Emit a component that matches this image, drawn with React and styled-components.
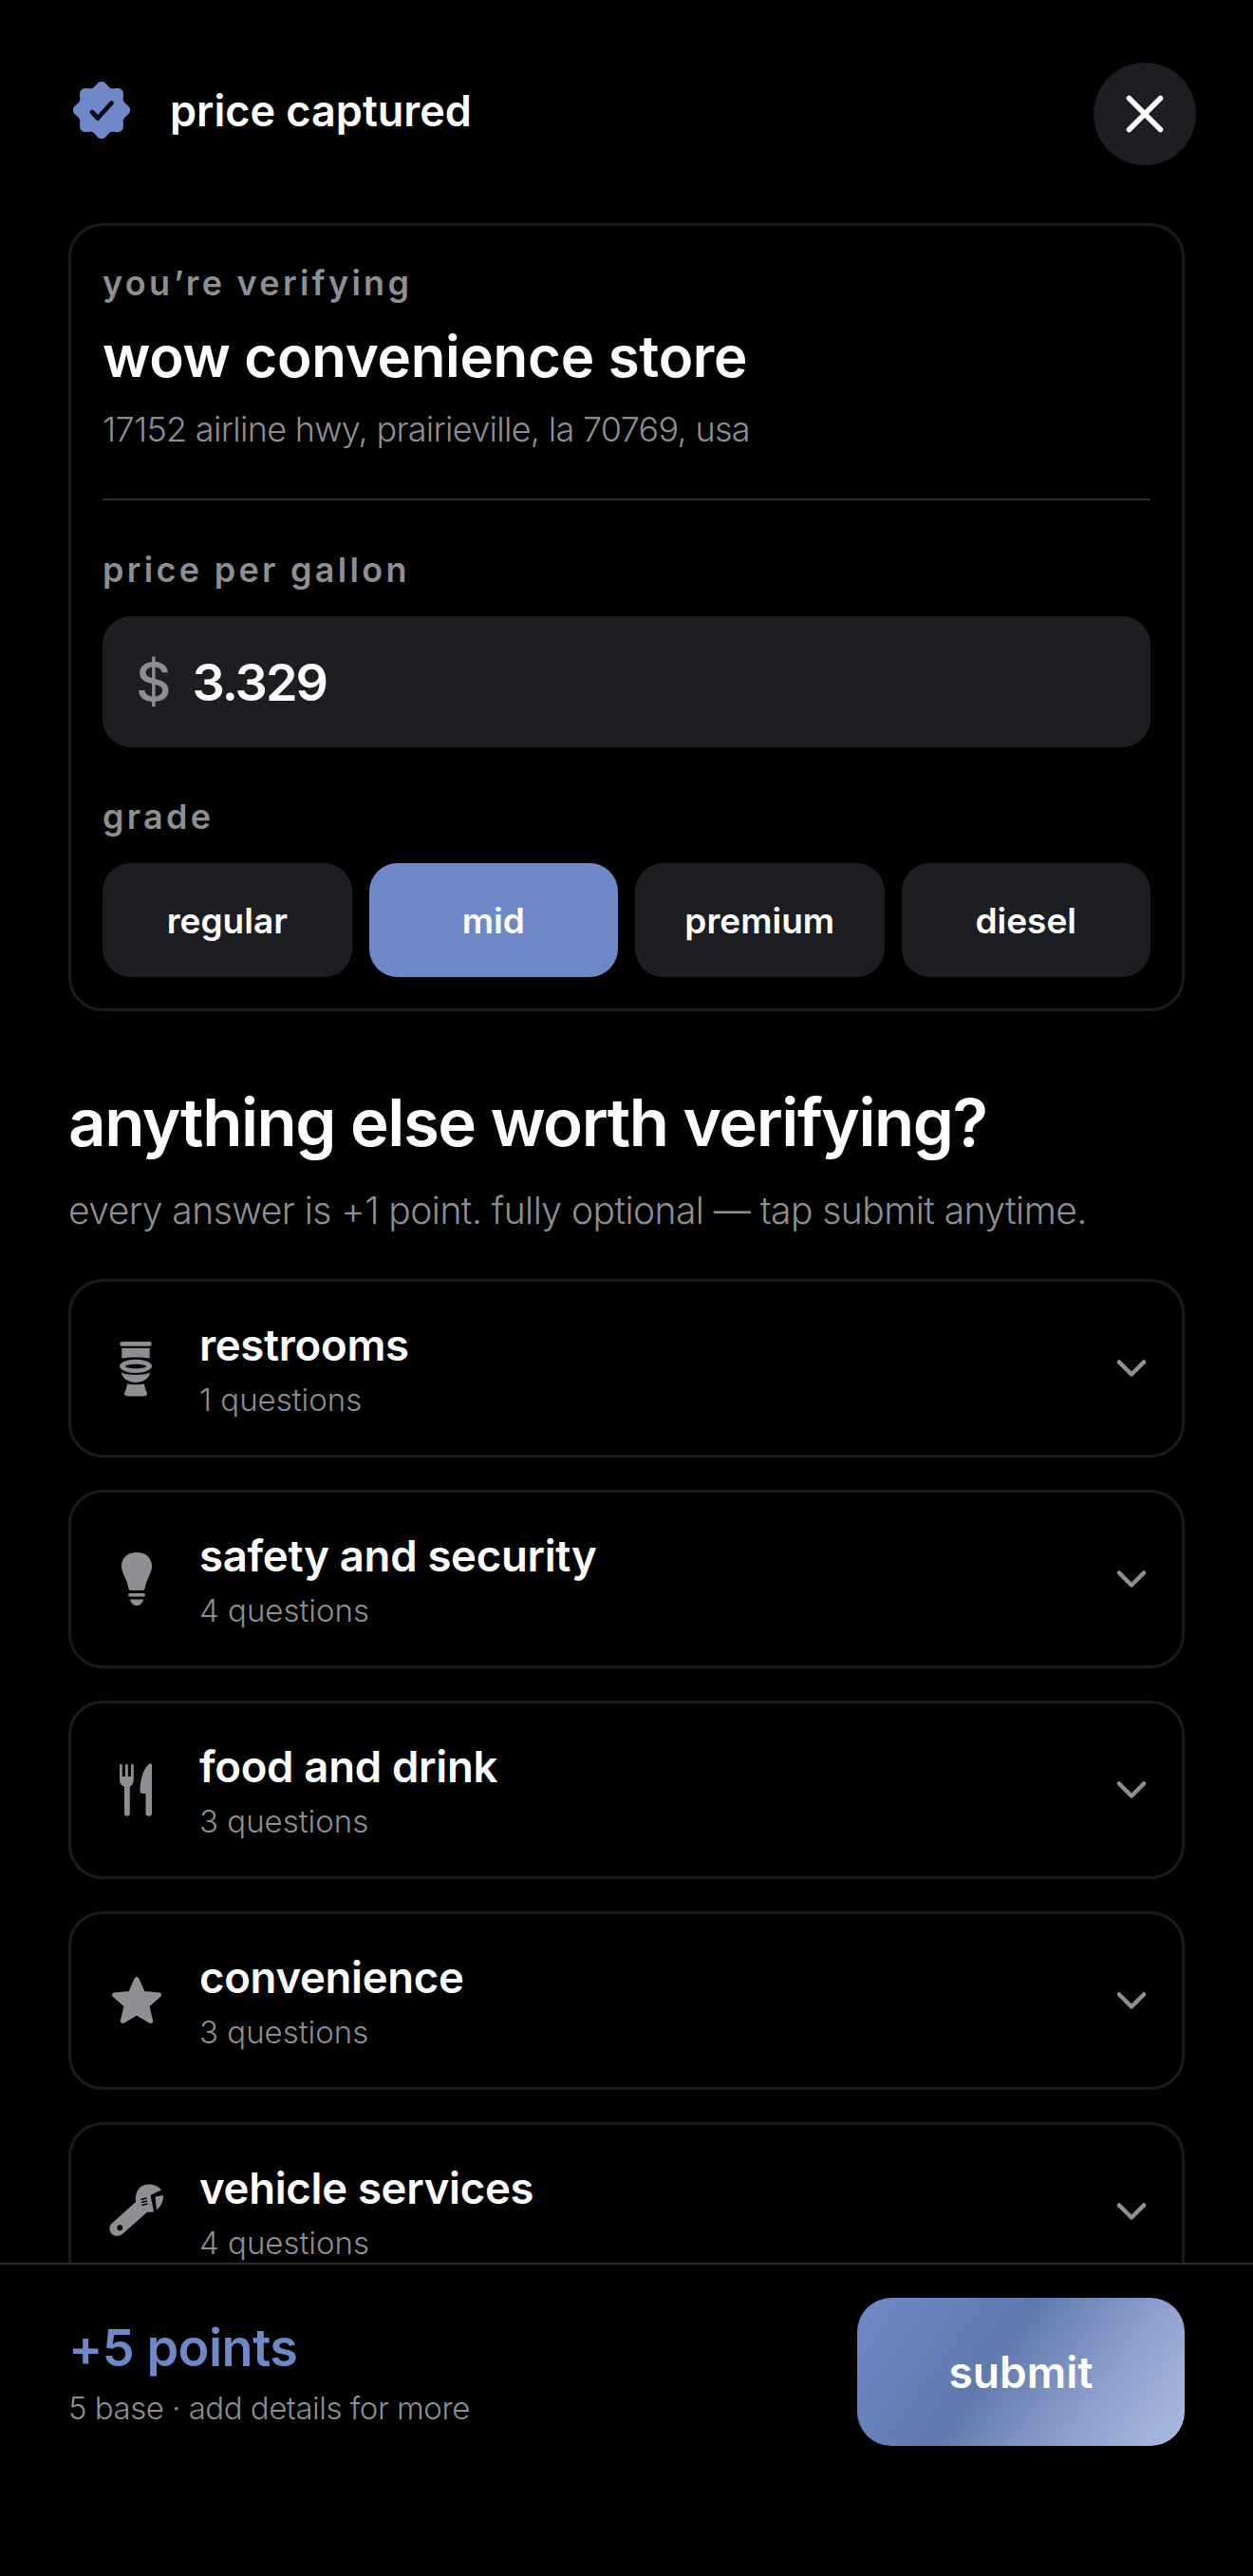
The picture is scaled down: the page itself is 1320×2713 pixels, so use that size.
import React from 'react'
import styled, { createGlobalStyle } from 'styled-components'
import { FiX, FiChevronDown } from 'react-icons/fi'

const GlobalStyle = createGlobalStyle`
  * { box-sizing: border-box; }
  html, body { margin: 0; padding: 0; background: #000; }
  body { font-family: Inter, 'Noto Sans', sans-serif; color: #fff; }
`

// scalloped outline: radius swings around 27.5 with eight lobes
const sealPath = () => {
  const pts = []
  for (let i = 0; i < 96; i++) {
    const a = (i * Math.PI * 2) / 96 - Math.PI / 2
    const r = 27.6 + 2.6 * Math.cos(8 * (a + Math.PI / 2))
    pts.push(`${(30 + r * Math.cos(a)).toFixed(2)},${(30 + r * Math.sin(a)).toFixed(2)}`)
  }
  return pts.join(' ')
}

const Seal = () => (
  <svg width="60" height="60" viewBox="0 0 60 60">
    <polygon points={sealPath()} fill="#6f88c8" />
    <path d="M20 32 L26 38.5 L40.5 22.5" fill="none" stroke="#0b0d14" strokeWidth="4.8" strokeLinecap="round" strokeLinejoin="round" />
  </svg>
)

// row icons all sit in the same 80px square
const IconFrame = ({ children }) => (
  <svg width="80" height="80" viewBox="0 0 80 80" fill="#8e8e93">
    {children}
  </svg>
)

const ToiletIcon = () => (
  <IconFrame>
    <rect x="21.3" y="12" width="33.4" height="4.7" rx="2.3" />
    <path d="M23.3 18.7 H52.7 V29.5 C45 28 31 28 23.3 29.5 Z" />
    <path fillRule="evenodd" d="M38 30.7 C47.4 30.7 55 33.900 55 37.800 C55 41.700 47.400 45 38 45 C28.600 45 21 41.700 21 37.800 C21 33.900 28.600 30.700 38 30.700 Z M38 35.800 C31.900 35.800 27 36.800 27 38 C27 39.200 31.900 40.200 38 40.200 C44.100 40.200 49 39.200 49 38 C49 36.800 44.100 35.800 38 35.800 Z" />
    <path d="M22.700 44.500 C28 47.700 48 47.700 53.300 44.500 C52 50.500 46 55 38 55 C30 55 24 50.500 22.700 44.500 Z" />
    <path d="M29 56.500 C34 57.500 42 57.500 47 56.500 C47.500 60 48.500 63 50 66 C50.500 68.500 48 69.500 45 69.500 H31 C28 69.500 25.500 68.500 26 66 C27.500 63 28.500 60 29 56.500 Z" />
  </IconFrame>
)

const BulbIcon = () => (
  <IconFrame>
    <g transform="translate(23 12)">
      <path d="M16 0 C26 0 32 6 32 14.500 C32 22 26.500 27 24.500 38 C24.300 39.500 23.500 40 22 40 H10 C8.500 40 7.700 39.500 7.500 38 C5.500 27 0 22 0 14.500 C0 6 6 0 16 0 Z" />
      <rect x="7" y="43" width="18" height="3.500" rx="1.700" />
      <path d="M9 49.500 H23 C22 53.500 19.500 56 16 56 C12.500 56 10 53.500 9 49.500 Z" />
    </g>
  </IconFrame>
)

const ForkKnifeIcon = () => (
  <IconFrame>
    <g transform="translate(21 12)">
      <path d="M0 2 C0 0.500 2.800 0.500 2.800 2 V14 H6 V2 C6 0.500 8.800 0.500 8.800 2 V14 H12 V2 C12 0.500 14.800 0.500 14.800 2 V17 C14.800 21.500 12.500 24 10.800 24.500 V53 C10.800 56.700 5 56.700 5 53 V24.500 C2.300 24 0 21.500 0 17 Z" />
      <path d="M34 2 V53 C34 56.700 27.500 56.700 27.500 53 V32 H24.500 C22.500 32 21.500 31 21.500 29 C21.500 17 25 6 31 0.800 C32.500 -0.400 34 0.300 34 2 Z" />
    </g>
  </IconFrame>
)

const StarIcon = () => (
  <IconFrame>
    <g transform="translate(12 14)">
      <path d="M27 3.500 L33.700 18.600 L50.500 20.100 L37.800 31 L41.700 47.500 L27 38.800 L12.300 47.500 L16.200 31 L3.500 20.100 L20.300 18.600 Z" stroke="#8e8e93" strokeWidth="5" strokeLinejoin="round" />
    </g>
  </IconFrame>
)

const WrenchIcon = () => (
  <IconFrame>
    <path fillRule="evenodd" d="M12.700 52.700 L38 30 C37 24 39 17 44 13.500 C50 10 60 11 65 17.500 L53.500 23 L57 40 C55 41 52 41 50 40.700 L25 63 C21 66.500 16 67 13 64 C10 61 9.500 55.500 12.700 52.700 Z M21.300 54.300 A3 3 0 1 0 21.300 60.300 A3 3 0 1 0 21.300 54.300 Z" />
    <path d="M58.500 24.500 L67 23 C67.500 28 65 34 60 38.500 Z" />
    <path d="M43.500 27.500 L49.500 26 M44 30.500 L50 29 M44.500 33.500 L50.500 32" stroke="#000" strokeWidth="1.300" fill="none" />
  </IconFrame>
)

const sections = [
  { title: 'restrooms', count: '1 questions', Icon: ToiletIcon },
  { title: 'safety and security', count: '4 questions', Icon: BulbIcon },
  { title: 'food and drink', count: '3 questions', Icon: ForkKnifeIcon },
  { title: 'convenience', count: '3 questions', Icon: StarIcon },
  { title: 'vehicle services', count: '4 questions', Icon: WrenchIcon },
]

const grades = ['regular', 'mid', 'premium', 'diesel']

const App = () => (
  <Screen>
    <GlobalStyle />
    <Content>
      <Header>
        <HeaderLeft>
          <Seal />
          <HeaderTitle>price captured</HeaderTitle>
        </HeaderLeft>
        <CloseButton type="button" aria-label="close">
          <FiX size={66} strokeWidth={2} />
        </CloseButton>
      </Header>

      <Card>
        <Label>you’re verifying</Label>
        <StoreName>wow convenience store</StoreName>
        <Address>17152 airline hwy, prairieville, la 70769, usa</Address>
        <Divider />
        <PriceLabel>price per gallon</PriceLabel>
        <PriceField>
          <Dollar>$</Dollar>
          <PriceValue>3.329</PriceValue>
        </PriceField>
        <GradeLabel>grade</GradeLabel>
        <Grades>
          {grades.map((g) => (
            <GradeButton key={g} type="button" $active={g === 'mid'}>
              {g}
            </GradeButton>
          ))}
        </Grades>
      </Card>

      <Heading>anything else worth verifying?</Heading>
      <SubHeading>every answer is +1 point. fully optional — tap submit anytime.</SubHeading>

      <SectionList>
        {sections.map(({ title, count, Icon }) => (
          <SectionRow key={title}>
            <IconSlot>
              <Icon />
            </IconSlot>
            <SectionText>
              <SectionTitle>{title}</SectionTitle>
              <SectionCount>{count}</SectionCount>
            </SectionText>
            <Chevron>
              <FiChevronDown size={52} strokeWidth={2.1} />
            </Chevron>
          </SectionRow>
        ))}
      </SectionList>
    </Content>

    <Footer>
      <div>
        <Points>+5 points</Points>
        <PointsNote>5 base · add details for more</PointsNote>
      </div>
      <SubmitButton type="button">submit</SubmitButton>
    </Footer>
  </Screen>
)

const Screen = styled.div`
  width: 1320px;
  height: 2713px;
  background: #000;
  display: flex;
  flex-direction: column;
  overflow: hidden;
`

const Content = styled.main`
  flex: 1;
  min-height: 0;
  overflow: hidden;
  padding: 66px 72px 0;
`

const Header = styled.header`
  display: flex;
  justify-content: space-between;
  align-items: flex-start;
  margin-right: -12px;
  height: 169px;
`

const HeaderLeft = styled.div`
  display: flex;
  align-items: center;
  gap: 42px;
  margin-left: 5px;
  padding-top: 18px;
`

const HeaderTitle = styled.h1`
  margin: 0;
  padding-top: 3px;
  font-size: 45px;
  font-weight: 600;
  line-height: 60px;
`

const CloseButton = styled.button`
  width: 108px;
  height: 108px;
  border-radius: 50%;
  border: none;
  background: #1c1e22;
  color: #fff;
  display: flex;
  align-items: center;
  justify-content: center;
  padding: 0;
`

const Card = styled.section`
  border: 3px solid #1a1b1e;
  border-radius: 36px;
  padding: 36px 33px 33px;
  height: 830px;
`

const Label = styled.div`
  font-size: 36px;
  font-weight: 600;
  line-height: 48px;
  letter-spacing: 3.3px;
  color: #8e8e93;
`

const PriceLabel = styled(Label)`
  margin-top: 49px;
`

const GradeLabel = styled(Label)`
  margin-top: 49px;
`

const StoreName = styled.h2`
  margin: 17px 0 0;
  font-size: 60px;
  font-weight: 600;
  line-height: 72px;
  letter-spacing: -0.3px;
`

const Address = styled.div`
  margin-top: 17px;
  font-size: 36px;
  font-weight: 300;
  line-height: 48px;
  letter-spacing: -0.7px;
  color: #8e8e93;
`

const Divider = styled.hr`
  margin: 49px 0 0;
  border: none;
  height: 2px;
  background: #2c2e33;
`

const PriceField = styled.div`
  margin-top: 25px;
  height: 138px;
  border-radius: 30px;
  background: #1c1e22;
  display: flex;
  align-items: center;
  gap: 22px;
  padding: 0 35px;
`

const Dollar = styled.span`
  font-size: 58px;
  font-weight: 500;
  color: #8e8e93;
`

const PriceValue = styled.span`
  font-size: 54px;
  font-weight: 600;
  letter-spacing: -2px;
`

const Grades = styled.div`
  margin-top: 25px;
  display: grid;
  grid-template-columns: repeat(4, 1fr);
  gap: 18px;
`

const GradeButton = styled.button`
  height: 120px;
  border: none;
  border-radius: 30px;
  background: ${(p) => (p.$active ? '#6f88c8' : '#1c1e22')};
  color: #fff;
  font-family: inherit;
  font-size: 37px;
  font-weight: 600;
`

const Heading = styled.h2`
  margin: 75px 0 0;
  font-size: 69px;
  font-weight: 600;
  line-height: 84px;
  letter-spacing: -1.45px;
`

const SubHeading = styled.p`
  margin: 24px 0 0;
  font-size: 39px;
  font-weight: 300;
  line-height: 54px;
  letter-spacing: -0.55px;
  color: #8e8e93;
`

const SectionList = styled.div`
  margin-top: 45px;
  display: flex;
  flex-direction: column;
  gap: 34px;
`

const SectionRow = styled.div`
  flex: none;
  height: 188px;
  border: 3px solid #1a1b1e;
  border-radius: 36px;
  display: flex;
  align-items: center;
  padding: 0 27px 0 30px;
`

const IconSlot = styled.div`
  width: 80px;
  height: 80px;
  flex: none;
  margin-right: 25px;
`

const SectionText = styled.div`
  flex: 1;
  min-width: 0;
`

const SectionTitle = styled.div`
  font-size: 45.5px;
  font-weight: 600;
  line-height: 60px;
  letter-spacing: -0.3px;
`

const SectionCount = styled.div`
  margin-top: 6px;
  font-size: 33px;
  font-weight: 300;
  line-height: 42px;
  color: #8e8e93;
`

const Chevron = styled.div`
  display: flex;
  color: #8e8e93;
`

const Footer = styled.footer`
  flex: none;
  height: 330px;
  border-top: 2px solid #2c2e33;
  background: #000;
  padding: 35px 72px 0;
  display: flex;
  justify-content: space-between;
  align-items: flex-start;
`

const Points = styled.div`
  margin-top: 20px;
  font-size: 54px;
  font-weight: 600;
  line-height: 66px;
  letter-spacing: -0.5px;
  color: #6f88c8;
`

const PointsNote = styled.div`
  margin-top: 9px;
  font-size: 33px;
  font-weight: 300;
  line-height: 42px;
  letter-spacing: -0.5px;
  color: #8e8e93;
`

const SubmitButton = styled.button`
  width: 345px;
  height: 156px;
  border: none;
  border-radius: 36px;
  color: #fff;
  font-family: inherit;
  font-size: 46px;
  font-weight: 600;
  background: linear-gradient(125deg, #6f88c8 0%, #607aae 42%, #8f9fce 72%, #abbbe2 100%);
`

export default App
